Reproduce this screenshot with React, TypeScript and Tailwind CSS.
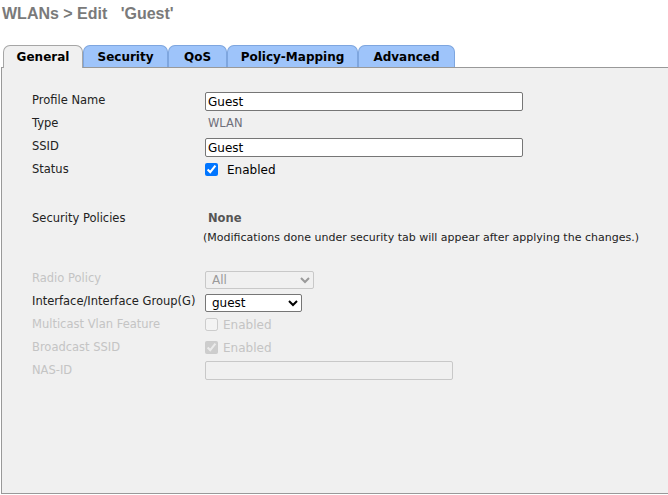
export default function App() {
  const tabs = [
    { t: "General", w: "w-[80px]" },
    { t: "Security", w: "w-[85px]" },
    { t: "QoS", w: "w-[59px]" },
    { t: "Policy-Mapping", w: "w-[131px]" },
    { t: "Advanced", w: "w-[97px]" },
  ];
  const label = "text-[11.5px] text-[#222]";
  const dim = "text-[11.5px] text-[#c4c4c4]";

  return (
    <div className="h-[495px] w-[668px] overflow-hidden bg-white font-['DejaVu_Sans',sans-serif]">
      <h1 className="pl-[2px] pt-[4px] font-['Liberation_Sans',Arial,sans-serif] text-[16px] font-bold leading-[20px] text-[#7a7a7a]">
        WLANs &gt; Edit&nbsp;&nbsp;&nbsp;'Guest'
      </h1>

      {/* tab strip */}
      <div className="mt-[21px] flex items-end pl-[3px]">
        {tabs.map((tab, i) => (
          <div
            key={tab.t}
            className={
              i === 0
                ? `relative z-10 -mb-px flex h-[23px] ${tab.w} items-center justify-center rounded-t-[7px] border border-b-0 border-[#a6a6a6] bg-[#f0f0f0] text-[12px] font-bold text-black`
                : `flex h-[22px] ${tab.w} items-center justify-center rounded-t-[7px] border border-b-0 border-[#7ea6df] bg-[#9ec4fa] text-[12px] font-bold text-black`
            }
          >
            {tab.t}
          </div>
        ))}
      </div>

      {/* panel */}
      <div className="ml-[1px] h-[427px] w-[680px] border border-[#999] bg-[#f0f0f0] pl-[30px] pt-[21px]">
        <div className="grid grid-cols-[173px_1fr] auto-rows-[23px] items-center">
          <div className={label}>Profile Name</div>
          <div>
            <input
              readOnly
              value="Guest"
              className="h-[19px] w-[318px] rounded-[2px] border border-[#767676] bg-white px-[2px] text-[12px] text-black outline-none"
            />
          </div>

          <div className={label}>Type</div>
          <div className="pl-[3px] text-[11.5px] text-[#6f6f7a]">WLAN</div>

          <div className={label}>SSID</div>
          <div>
            <input
              readOnly
              value="Guest"
              className="h-[19px] w-[318px] rounded-[2px] border border-[#767676] bg-white px-[2px] text-[12px] text-black outline-none"
            />
          </div>

          <div className={label}>Status</div>
          <div className="flex items-center">
            <input type="checkbox" readOnly checked className="m-0 h-[13px] w-[13px] accent-[#0075ff]" />
            <span className="ml-[9px] text-[12px] text-black">Enabled</span>
          </div>
        </div>

        <div className="mt-[25px] grid grid-cols-[173px_1fr] items-center">
          <div className={`${label} h-[24px] leading-[24px]`}>Security Policies</div>
          <div className="h-[24px] pl-[3px] text-[11.5px] font-bold leading-[24px] text-[#555]">None</div>
          <div />
          <div className="-ml-[2px] text-[11px] leading-[15px] text-[#222]">
            (Modifications done under security tab will appear after applying the changes.)
          </div>
        </div>

        <div className="mt-[22px] grid grid-cols-[173px_1fr] auto-rows-[23px] items-center">
          <div className={dim}>Radio Policy</div>
          <div>
            <select
              disabled
              className="h-[18px] w-[109px] rounded-[2px] border border-[#c8c8c8] bg-[#f0f0f0] pl-[2px] text-[12px] text-[#9a9a9a]"
            >
              <option>All</option>
            </select>
          </div>

          <div className={label}>Interface/Interface Group(G)</div>
          <div>
            <select className="h-[18px] w-[97px] rounded-[2px] border border-[#767676] bg-white pl-[2px] text-[12px] text-black">
              <option>guest</option>
            </select>
          </div>

          <div className={dim}>Multicast Vlan Feature</div>
          <div className="flex items-center">
            <input type="checkbox" disabled className="m-0 h-[13px] w-[13px]" />
            <span className="ml-[5px] text-[12px] text-[#c4c4c4]">Enabled</span>
          </div>

          <div className={dim}>Broadcast SSID</div>
          <div className="flex items-center">
            <input type="checkbox" disabled checked readOnly className="m-0 h-[13px] w-[13px]" />
            <span className="ml-[5px] text-[12px] text-[#c4c4c4]">Enabled</span>
          </div>

          <div className={dim}>NAS-ID</div>
          <div>
            <input
              disabled
              className="h-[19px] w-[248px] rounded-[2px] border border-[#c8c8c8] bg-[#f0f0f0]"
            />
          </div>
        </div>
      </div>
    </div>
  );
}
